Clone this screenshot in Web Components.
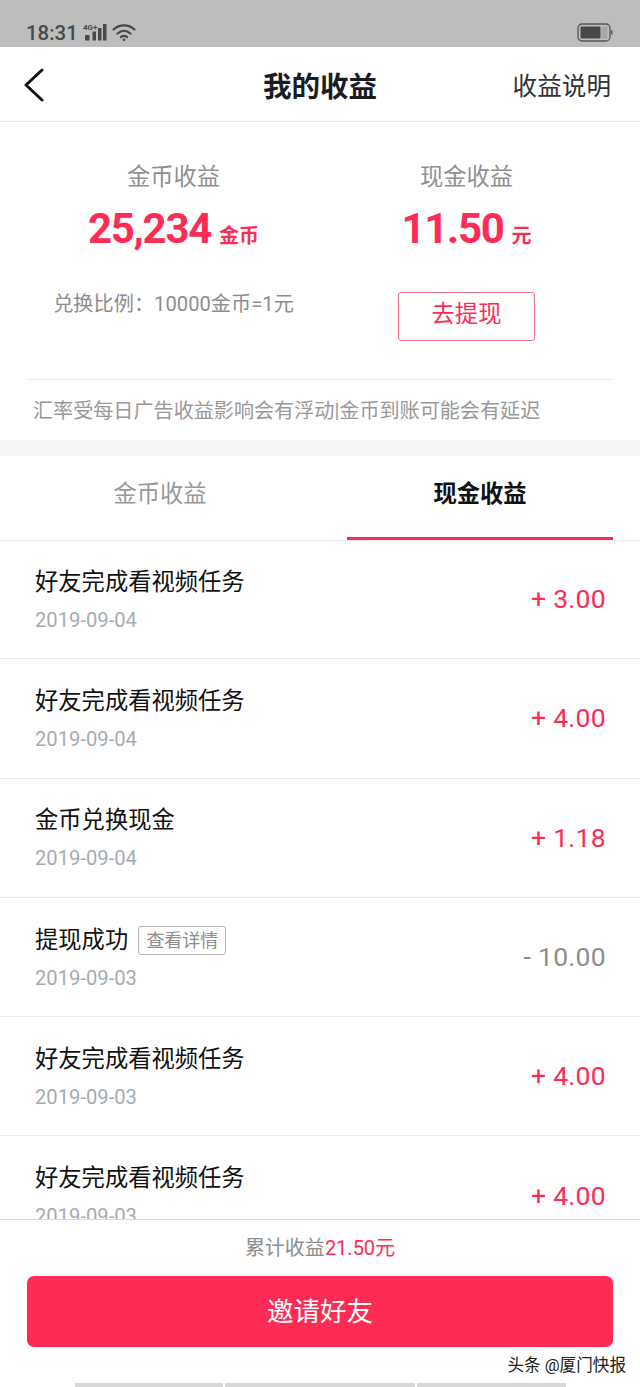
<!DOCTYPE html>
<html><head><meta charset="utf-8"><style>
html,body{margin:0;padding:0;background:#fff}
body{width:640px;height:1387px;overflow:hidden;font-family:Roboto,"Noto Sans CJK SC",sans-serif}
</style></head><body>
<app-status></app-status>
<app-nav></app-nav>
<app-summary></app-summary>
<app-tabs></app-tabs>
<app-list>
<app-row title="好友完成看视频任务" date="2019-09-04" amount="+ 3.00"></app-row>
<app-row title="好友完成看视频任务" date="2019-09-04" amount="+ 4.00"></app-row>
<app-row title="金币兑换现金" date="2019-09-04" amount="+ 1.18"></app-row>
<app-row title="提现成功" date="2019-09-03" amount="- 10.00" tag="查看详情" neg></app-row>
<app-row title="好友完成看视频任务" date="2019-09-03" amount="+ 4.00"></app-row>
<app-row title="好友完成看视频任务" date="2019-09-03" amount="+ 4.00"></app-row>
</app-list>
<app-footer></app-footer>
<script>
const CJK='Roboto,"Noto Sans CJK SC",sans-serif';
function def(name,html){customElements.define(name,class extends HTMLElement{connectedCallback(){if(this.shadowRoot)return;const s=this.attachShadow({mode:'open'});s.innerHTML=typeof html==='function'?html(this):html;}});}
def('app-status',`<style>:host{display:flex;height:47px;background:#bdbdbd;box-sizing:border-box;padding:21px 27px 0 26px;color:#484848;align-items:flex-start}
.t{font:500 20.4px/24px Roboto,sans-serif}
svg{display:block}.g{flex:1}</style>
<span class="t">18:31</span>
<svg style="margin:2px 0 0 5px" width="25" height="19" viewBox="0 0 25 19"><text x="0" y="7" font-size="8" font-weight="700" font-family="Roboto" fill="#484848">4G+</text><rect x="2" y="12" width="4.5" height="5.5" fill="#484848"/><rect x="9.5" y="8.5" width="3.5" height="9" fill="#484848"/><rect x="15" y="5" width="3.5" height="12.5" fill="#484848"/><rect x="20" y="1" width="3.5" height="16.5" fill="#484848"/></svg>
<svg style="margin:2px 0 0 4px" width="24" height="19" viewBox="0 0 24 19" fill="none" stroke="#484848" stroke-width="2.2" stroke-linecap="round"><path d="M1.5 6.5C7.5 1 16.5 1 22.5 6.5"/><path d="M5.5 10.5C9.5 7 14.5 7 18.5 10.5"/><path d="M9 14C11 12.5 13 12.5 15 14"/><circle cx="12" cy="16.8" r="1.4" fill="#484848" stroke="none"/></svg>
<span class="g"></span>
<svg style="margin:2px 0 0 0" width="36" height="20" viewBox="0 0 36 20"><rect x="1" y="1" width="32" height="17" rx="4" fill="none" stroke="#555" stroke-width="1.3"/><rect x="3.5" y="3.5" width="20" height="12" rx="1" fill="#484848"/><rect x="24.5" y="3.5" width="6" height="12" fill="#a8a8a8"/><rect x="34" y="7.5" width="1.5" height="4" fill="#555"/></svg>`);
def('app-nav',`<style>:host{display:grid;grid-template-columns:1fr auto 1fr;align-items:center;height:75px;border-bottom:1px solid #ececec;box-sizing:border-box;padding:0 29px;font-family:${CJK}}
.b{font-weight:700;font-size:28.5px;color:#1b1b22}
.r{justify-self:end;font-size:24.6px;color:#333}
svg{display:block;margin:2px 0 0 -5px}</style>
<svg width="20" height="34" viewBox="0 0 20 34" fill="none" stroke="#111" stroke-width="3" stroke-linecap="round" stroke-linejoin="round"><path d="M18 2L2 17L18 32"/></svg>
<span class="b">我的收益</span><span class="r">收益说明</span>`);
def('app-summary',`<style>:host{display:block;height:334px;box-sizing:border-box;font-family:${CJK};border-bottom:16px solid #f5f5f5}
.grid{display:grid;grid-template-columns:347px 239px;height:257px;box-sizing:border-box;padding-top:37px}
.c{display:flex;flex-direction:column;align-items:center}
.h{font-size:23.3px;line-height:36px;color:#909090}
.v{display:flex;align-items:baseline;color:#fe2c55;font-weight:700;margin-top:9px;line-height:50px}
.v b{font:700 42px/50px Roboto,sans-serif;letter-spacing:-1.3px}
.v i{font-style:normal;font-size:20px;margin-left:8px}
.ratio{font-size:20.2px;color:#8d8d8d;margin-top:28px;line-height:30px;white-space:nowrap}
.btn{margin-top:31px;width:137px;height:49px;box-sizing:border-box;border:1px solid #f0738c;border-radius:3px;color:#fe2c55;font-size:23.3px;display:flex;align-items:center;justify-content:center;padding-bottom:9px}
.note{margin:0 27px;border-top:1px solid #ececec;padding:16px 0 0 6px;font-size:20.1px;line-height:30px;color:#999;white-space:nowrap}</style>
<div class="grid"><div class="c"><span class="h">金币收益</span><span class="v"><b>25,234</b><i>金币</i></span><span class="ratio">兑换比例：10000金币=1元</span></div>
<div class="c"><span class="h">现金收益</span><span class="v"><b>11.50</b><i>元</i></span><span class="btn">去提现</span></div></div>
<div class="note">汇率受每日广告收益影响会有浮动|金币到账可能会有延迟</div>`);
def('app-tabs',`<style>:host{display:grid;grid-template-columns:320px 320px;height:85px;border-bottom:1px solid #ececec;box-sizing:border-box;font-family:${CJK};font-size:23.3px;text-align:center;line-height:77px;color:#999}
.a{color:#111;font-weight:700;position:relative}
.a::after{content:"";position:absolute;left:27px;right:27px;bottom:0;height:3px;background:#fe2c55}</style>
<div>金币收益</div><div class="a">现金收益</div>`);
def('app-list',`<style>:host{display:block;height:679px;margin-top:-1px;overflow:hidden}</style><slot></slot>`);
def('app-row',(e)=>`<style>:host{display:flex;align-items:center;height:119.3px;box-sizing:border-box;border-bottom:1px solid #ececec;padding:2px 34px 2px 35px;font-family:${CJK}}
.m{flex:1;min-width:0}
.t{display:flex;align-items:center;font-size:23.3px;line-height:36px;color:#111}
.tag{margin:2px 0 0 10px;font-size:18px;line-height:27px;border:1px solid #b5b5b5;border-radius:3px;padding:0 7px;color:#8d8d8d}
.d{font:20.2px/30px Roboto,sans-serif;color:#a6abb3;margin-top:5px}
.a{font:26.5px/40px Roboto,sans-serif;color:${e.hasAttribute('neg')?'#8d8d8d':'#fe2c55'};letter-spacing:.3px}</style>
<div class="m"><div class="t">${e.getAttribute('title')}${e.getAttribute('tag')?`<span class="tag">${e.getAttribute('tag')}</span>`:''}</div><div class="d">${e.getAttribute('date')}</div></div><div class="a">${e.getAttribute('amount')}</div>`);
def('app-footer',`<style>:host{display:block;height:168px;box-sizing:border-box;border-top:1px solid #dcdcdc;font-family:${CJK};background:#fff;position:relative}
.s{text-align:center;font-size:20px;line-height:28px;padding-top:14px;color:#8d8d8d}
.s b{font-weight:400;color:#fe2c55}
.btn{margin:14px 27px 0;height:71px;box-sizing:border-box;padding-bottom:4px;background:#fe2c55;border-radius:7px;color:#fff;font-size:26.5px;display:flex;align-items:center;justify-content:center}
.wm{position:absolute;right:14px;top:134px;font-size:16.6px;line-height:24px;color:#222;white-space:nowrap}
.bar{position:absolute;left:75px;top:163px;display:grid;grid-template-columns:148px 190px 149px;gap:2px;height:5px}
.bar i{background:#d8d8d8}</style>
<div class="s">累计收益<b>21.50元</b></div><div class="btn">邀请好友</div><div class="wm">头条 @厦门快报</div><div class="bar"><i></i><i></i><i></i></div>`);
</script>
</body></html>
